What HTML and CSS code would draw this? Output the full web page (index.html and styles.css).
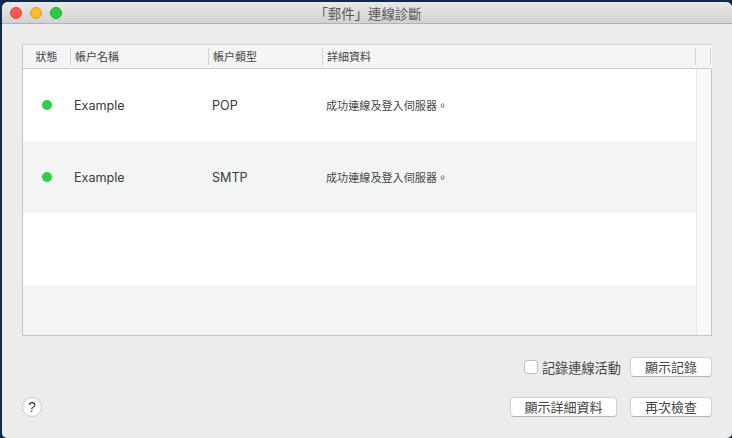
FILE: index.html
```html
<!DOCTYPE html>
<html lang="zh-Hant">
<head>
<meta charset="utf-8">
<title>「郵件」連線診斷</title>
<link rel="stylesheet" href="styles.css">
</head>
<body>
<div class="window">
  <header class="titlebar">
    <div class="lights">
      <span class="light red"></span>
      <span class="light yellow"></span>
      <span class="light green"></span>
    </div>
    <div class="title">「郵件」連線診斷</div>
  </header>
  <main class="content">
    <section class="table">
      <div class="thead">
        <div class="th c-status">狀態</div>
        <div class="th c-name">帳户名稱</div>
        <div class="th c-type">帳户類型</div>
        <div class="th c-detail">詳細資料</div>
        <div class="th c-scroll"></div>
      </div>
      <div class="tbody">
        <div class="rows">
          <div class="row">
            <div class="c-status"><span class="dot"></span></div>
            <div class="c-name latin">Example</div>
            <div class="c-type latin">POP</div>
            <div class="c-detail small">成功連線及登入伺服器。</div>
          </div>
          <div class="row alt">
            <div class="c-status"><span class="dot"></span></div>
            <div class="c-name latin">Example</div>
            <div class="c-type latin">SMTP</div>
            <div class="c-detail small">成功連線及登入伺服器。</div>
          </div>
          <div class="row"></div>
          <div class="row alt last"></div>
        </div>
        <div class="scrolltrack"></div>
      </div>
    </section>
    <div class="actions first">
      <label class="check"><span class="box"></span>記錄連線活動</label>
      <button class="btn b-log">顯示記錄</button>
    </div>
    <div class="actions second">
      <button class="help">?</button>
      <button class="btn b-detail">顯示詳細資料</button>
      <button class="btn b-log">再次檢查</button>
    </div>
  </main>
</div>
</body>
</html>
```
FILE: styles.css
```css
* { box-sizing: border-box; }
html, body { margin: 0; height: 100%; }
body {
  background: #12294a;
  overflow: hidden;
  font-family: "Noto Sans CJK TC", "Liberation Sans", sans-serif;
  color: #2b2b2b;
}
.window {
  margin: 2px 0 0 2px;
  width: 730px;
  height: 436px;
  background: #ececec;
  border-radius: 6px 6px 5px 5px;
  display: flex;
  flex-direction: column;
  overflow: hidden;
}
.titlebar {
  height: 22px;
  flex: none;
  background: linear-gradient(#e8e8e8, #d2d2d2);
  border-bottom: 1px solid #b1b1b1;
  display: flex;
  align-items: center;
  justify-content: center;
  position: relative;
}
.lights {
  position: absolute;
  left: 8px;
  top: 5px;
  display: flex;
  gap: 8px;
}
.light {
  width: 12px;
  height: 12px;
  border-radius: 50%;
}
.red { background: #fc5652; border: 1px solid #e0443e; }
.yellow { background: #fdbc2e; border: 1px solid #dfa023; }
.green { background: #2ccb41; border: 1px solid #1eab2c; }
.title {
  font-size: 13.4px;
  line-height: 22px;
  color: #555;
  transform: translateX(1px);
}
.content {
  flex: 1;
  padding: 20px 20px 0 20px;
  display: flex;
  flex-direction: column;
}
.table {
  height: 292px;
  flex: none;
  border: 1px solid #c6c6c6;
  border-top-color: #cfcfcf;
  border-right: 0;
  display: flex;
  flex-direction: column;
  background: #fff;
}
.thead {
  height: 24px;
  flex: none;
  display: flex;
  align-items: center;
  background: #f5f5f5;
  border-bottom: 1px solid #cdcdcd;
  font-size: 11px;
  color: #444;
}
.th {
  height: 17px;
  line-height: 17px;
  border-right: 1px solid #d4d4d4;
}
.c-status { width: 48px; flex: none; }
.c-name { width: 138px; flex: none; padding-left: 4px; }
.c-type { width: 114px; flex: none; padding-left: 4px; }
.c-detail { width: 373px; flex: none; padding-left: 4px; }
.c-scroll { width: 15px; flex: none; }
.th.c-status { text-align: center; }
.tbody {
  flex: 1;
  display: flex;
  min-height: 0;
  border-right: 1px solid #c6c6c6;
}
.rows {
  width: 673px;
  flex: none;
  display: flex;
  flex-direction: column;
}
.row {
  height: 72px;
  flex: none;
  display: flex;
  align-items: center;
  background: #fff;
}
.row.alt { background: #f3f5f5; }
.row.last { height: 50px; }
.row .c-status { display: flex; justify-content: center; }
.row .c-name, .row .c-type, .row .c-detail { padding-left: 3px; }
.latin { font-family: "Inter", "Liberation Sans", sans-serif; font-size: 12.6px; color: #3a3a3a; }
.small { font-size: 11px; color: #444; letter-spacing: 0.1px; }
.dot {
  width: 10px;
  height: 10px;
  border-radius: 50%;
  background: #2fce44;
}
.scrolltrack {
  flex: 1;
  background: #f9f9f9;
  border-left: 1px solid #e6e6e6;
}
.actions {
  display: flex;
  align-items: center;
  justify-content: flex-end;
}
.actions.first { margin-top: 21px; height: 20px; }
.actions.second { margin-top: 20px; height: 20px; }
.check {
  display: flex;
  align-items: center;
  font-size: 13.2px;
  margin-right: 9px;
  color: #444;
}
.box {
  width: 14px;
  height: 14px;
  background: #fff;
  border: 1px solid #c0c0c0;
  border-radius: 3px;
  margin-right: 4px;
}
.btn {
  height: 20px;
  padding: 0;
  background: #fff;
  border: 1px solid #d0d0d0;
  border-bottom-color: #b4b4b4;
  border-radius: 4px;
  font: 13px/18px "Noto Sans CJK TC", "Liberation Sans", sans-serif;
  color: #444;
}
.b-log { width: 82px; }
.b-detail { width: 107px; margin-right: 13px; }
.help {
  width: 20px;
  height: 20px;
  margin-right: auto;
  padding: 0;
  border-radius: 50%;
  background: #fff;
  border: 1px solid #c8c8c8;
  font: 14px/18px "Liberation Sans", sans-serif;
  color: #3a3a3a;
}
```
